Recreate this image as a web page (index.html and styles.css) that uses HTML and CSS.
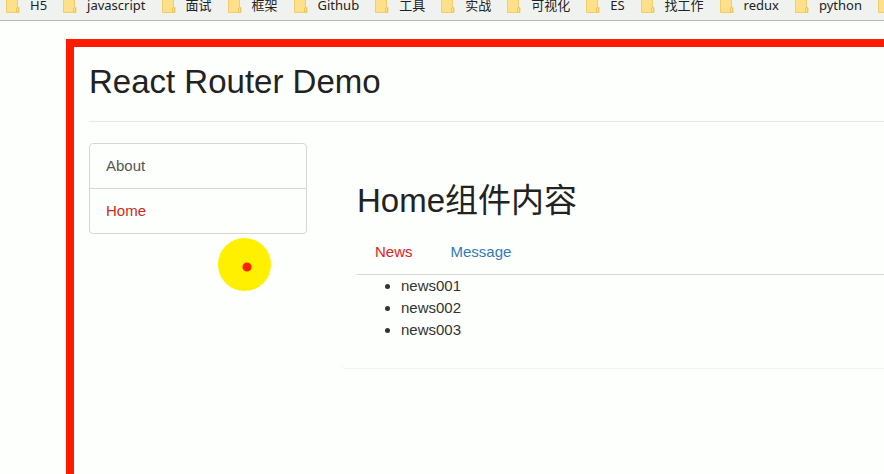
FILE: index.html
```html
<!DOCTYPE html>
<html lang="zh">
<head>
    <meta charset="UTF-8">
    <meta name="viewport" content="width=device-width, initial-scale=1.0">
    <title>React Router Demo</title>
    <link rel="stylesheet" href="styles.css">
</head>
<body>
    <svg class="defs" aria-hidden="true">
        <symbol id="folder" viewBox="0 0 14 16">
            <path d="M0.5 0.5h11v10h1.5v5h-12.5z" fill="#ffe08a" stroke="#f3cd6a"/>
            <path d="M10.5 11h2v4h-2z" fill="#ffe9a6" stroke="#efc45a"/>
        </symbol>
    </svg>
    <nav class="bookmarks">
        <a href="#"><svg><use href="#folder"/></svg>H5</a>
        <a href="#"><svg><use href="#folder"/></svg>javascript</a>
        <a href="#"><svg><use href="#folder"/></svg>面试</a>
        <a href="#"><svg><use href="#folder"/></svg>框架</a>
        <a href="#"><svg><use href="#folder"/></svg>Github</a>
        <a href="#"><svg><use href="#folder"/></svg>工具</a>
        <a href="#"><svg><use href="#folder"/></svg>实战</a>
        <a href="#"><svg><use href="#folder"/></svg>可视化</a>
        <a href="#"><svg><use href="#folder"/></svg>ES</a>
        <a href="#"><svg><use href="#folder"/></svg>找工作</a>
        <a href="#"><svg><use href="#folder"/></svg>redux</a>
        <a href="#"><svg><use href="#folder"/></svg>python</a>
        <a href="#" aria-label="more"><svg><use href="#folder"/></svg></a>
    </nav>
    <main class="app">
        <div class="page-header">
            <h2>React Router Demo</h2>
        </div>
        <div class="row">
            <div class="list-group">
                <a class="list-group-item" href="#about">About</a>
                <a class="list-group-item active" href="#home">Home</a>
            </div>
            <div class="panel">
                <h2>Home组件内容</h2>
                <ul class="nav-tabs">
                    <li><a class="active" href="#news">News</a></li>
                    <li><a href="#message">Message</a></li>
                </ul>
                <ul class="news">
                    <li>news001</li>
                    <li>news002</li>
                    <li>news003</li>
                </ul>
            </div>
        </div>
    </main>
    <div class="pointer"></div>
</body>
</html>
```

FILE: styles.css
```css
* {
    box-sizing: border-box;
}

body {
    display: flex;
    flex-direction: column;
    min-height: 100vh;
    margin: 0;
    overflow: hidden;
    background-color: #fdfffc;
    color: #333;
    font-family: "Liberation Sans", "Noto Sans CJK SC", Arial, sans-serif;
    font-size: 15px;
    line-height: 22px;
}

a {
    color: #337ab7;
    text-decoration: none;
}

.defs {
    display: none;
}

/* bookmarks bar */
.bookmarks {
    display: flex;
    align-items: flex-end;
    gap: 16px;
    height: 21px;
    padding: 0 0 5px 6px;
    overflow: hidden;
    background-color: #f0f2f0;
    border-bottom: 1px solid #b8b8b8;
    font-family: "Noto Sans", "Noto Sans CJK SC", sans-serif;
    font-size: 13px;
    line-height: 20px;
}

.bookmarks a {
    display: flex;
    flex-shrink: 0;
    align-items: center;
    gap: 10px;
    height: 20px;
    color: #222;
    white-space: nowrap;
}

.bookmarks svg {
    width: 14px;
    height: 16px;
}

/* app frame */
.app {
    flex: 1;
    margin: 18px 0 0 66px;
    padding: 17px 0 0 15px;
    border-top: 8px solid #ff1a00;
    border-left: 8px solid #ff1a00;
}

h2 {
    margin: 0;
    color: #222;
    font-size: 33px;
    font-weight: normal;
    line-height: 36px;
}

.page-header {
    padding-bottom: 21px;
    margin-bottom: 21px;
    border-bottom: 1px solid #e8eae8;
}

.row {
    display: flex;
    align-items: flex-start;
    gap: 34px;
}

.list-group {
    flex: 0 0 218px;
    border: 1px solid #d6d8d6;
    border-radius: 4px;
}

.list-group-item {
    display: block;
    padding: 11px 16px;
    color: #555;
}

.list-group-item + .list-group-item {
    border-top: 1px solid #d6d8d6;
}

.list-group-item.active {
    color: #d02a20;
}

.panel {
    flex: 1;
    padding: 40px 0 27px 16px;
    border-radius: 4px 0 0 4px;
    box-shadow: 0 1px 1px rgba(0, 0, 0, 0.05);
}

.nav-tabs {
    display: flex;
    gap: 2px;
    margin: 11px 0 0;
    padding: 0;
    border-bottom: 1px solid #d6d8d6;
    list-style: none;
}

.nav-tabs a {
    display: block;
    padding: 11px 18px;
}

.nav-tabs .active {
    color: #e8201a;
}

.news {
    margin: 0;
    padding-left: 44px;
}

/* click highlight around the mouse */
.pointer {
    position: absolute;
    top: 238px;
    left: 218px;
    width: 53px;
    height: 53px;
    border-radius: 50%;
    background: radial-gradient(circle at 29px 29px, #ff2000 4px, #fff000 5px);
}
```
